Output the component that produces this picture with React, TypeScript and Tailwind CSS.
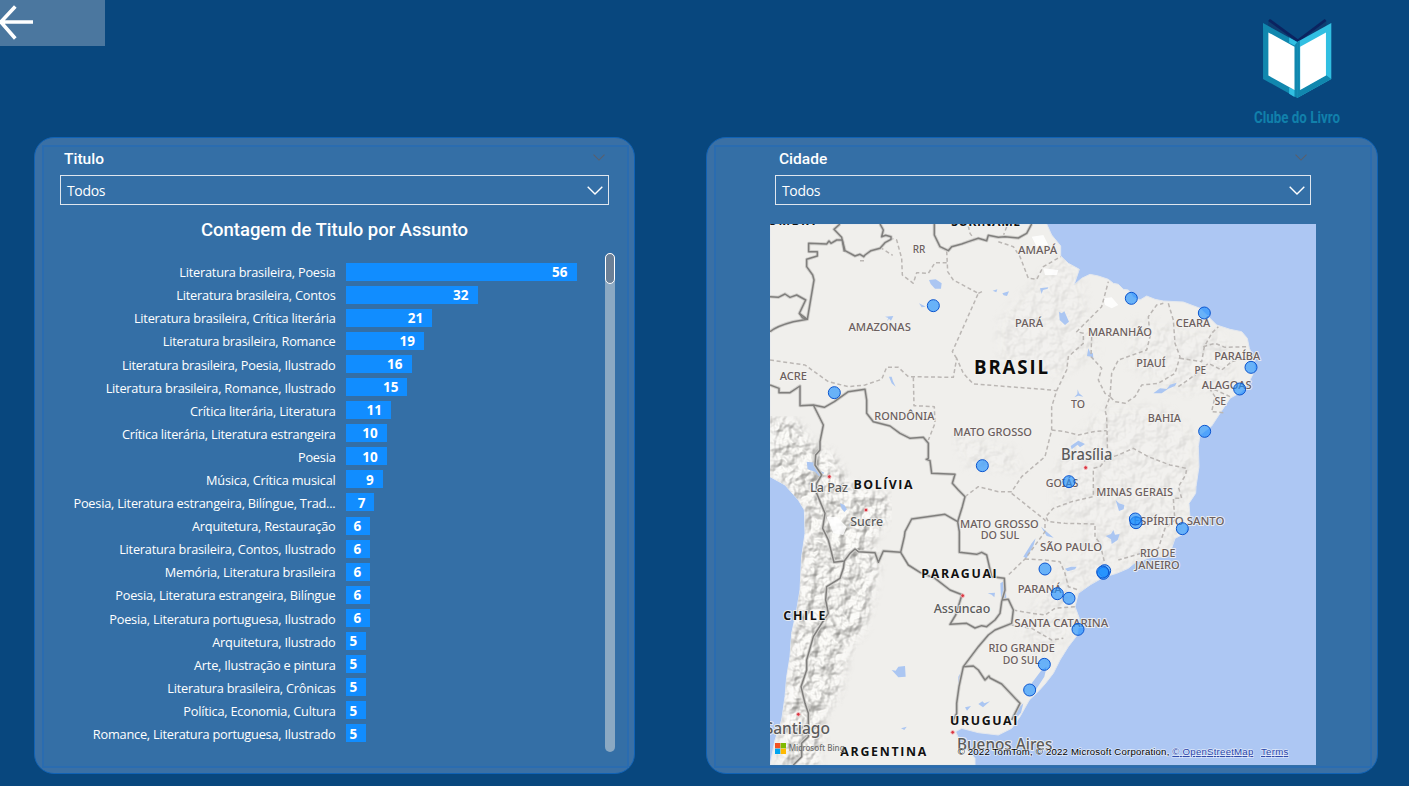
import React from "react";

type Row = { label: string; value: number };

const rows: Row[] = [
  { label: "Literatura brasileira, Poesia", value: 56 },
  { label: "Literatura brasileira, Contos", value: 32 },
  { label: "Literatura brasileira, Crítica literária", value: 21 },
  { label: "Literatura brasileira, Romance", value: 19 },
  { label: "Literatura brasileira, Poesia, Ilustrado", value: 16 },
  { label: "Literatura brasileira, Romance, Ilustrado", value: 15 },
  { label: "Crítica literária, Literatura", value: 11 },
  { label: "Crítica literária, Literatura estrangeira", value: 10 },
  { label: "Poesia", value: 10 },
  { label: "Música, Crítica musical", value: 9 },
  { label: "Poesia, Literatura estrangeira, Bilíngue, Trad...", value: 7 },
  { label: "Arquitetura, Restauração", value: 6 },
  { label: "Literatura brasileira, Contos, Ilustrado", value: 6 },
  { label: "Memória, Literatura brasileira", value: 6 },
  { label: "Poesia, Literatura estrangeira, Bilíngue", value: 6 },
  { label: "Poesia, Literatura portuguesa, Ilustrado", value: 6 },
  { label: "Arquitetura, Ilustrado", value: 5 },
  { label: "Arte, Ilustração e pintura", value: 5 },
  { label: "Literatura brasileira, Crônicas", value: 5 },
  { label: "Política, Economia, Cultura", value: 5 },
  { label: "Romance, Literatura portuguesa, Ilustrado", value: 5 },
];

const PX_PER_TITLE = 4.125;

/* Map geometry: three map units per screen pixel. */
const land =
  "M15 12 L845 12 860 45 887 78 887 108 910 130 943 148 927 195 950 175 975 163 1000 168 1030 178 1045 190 1060 193 1075 208 1090 210 1105 232 1125 240 1145 228 1170 238 1195 243 1255 246 1305 265 1330 290 1355 315 1395 328 1430 335 1447 355 1453 385 1465 410 1470 450 1450 490 1430 515 1395 535 1365 580 1340 618 1305 645 1300 680 1302 740 1293 800 1292 820 1272 850 1275 895 1260 940 1230 955 1220 985 1200 1012 1165 1010 1110 1028 1090 1045 1055 1060 1015 1072 975 1095 940 1120 930 1160 943 1195 937 1245 910 1280 885 1320 865 1360 840 1392 822 1412 793 1440 765 1490 740 1525 700 1545 640 1538 590 1525 572 1535 590 1575 612 1595 630 1615 630 1635 15 1635 30 1560 50 1500 60 1430 65 1370 75 1310 80 1240 95 1170 105 1110 110 1010 120 940 118 870 100 840 60 795 15 770Z";

const andes =
  "M15 590 L90 600 150 680 200 700 250 790 380 830 370 900 320 960 340 1040 320 1130 300 1220 250 1290 220 1420 170 1500 160 1635 40 1635 60 1450 85 1240 112 1000 118 870 15 765Z";

const highlands =
  "M870 730 L1010 560 1200 560 1290 640 1290 830 1250 940 1190 1010 1050 1050 940 1110 920 1240 840 1330 760 1240 820 1130 900 1040 960 930 870 870Z M920 60 L1000 400 880 470 700 420 700 300Z M1100 300 L1380 340 1420 500 1240 520 1090 440Z M560 640 L740 680 780 760 600 740Z";

const borders = [
  "M15 230 L40 232 60 222 75 232 95 225 122 240 103 280 127 298",
  "M15 335 Q35 318 85 305 L127 298 112 293 103 280",
  "M127 298 L147 180 143 165 125 140 125 118 157 108 157 95 131 95 131 70 185 72 192 63 198 70 215 60 232 60 240 92 270 108 285 103 296 110 300 105 318 92 345 85 360 68 378 58 378 50 362 46 350 50 355 30 345 12",
  "M238 95 L230 52 207 28 225 12",
  "M508 12 L508 45 525 80 550 92 560 80 590 72 610 65 640 55 665 62 670 46 700 52 720 50 760 54 785 40 800 12",
  "M15 495 L42 505 42 518 75 518 105 498 105 557 145 555 178 562 208 545 250 515 300 508 305 540 305 580 325 605 375 618 405 640 435 655 475 652 490 670 490 715 484 718 495 722 500 760 570 763 562 790 580 810 600 830 592 860 578 905",
  "M145 555 L175 615 165 665 165 690 152 705 150 735 170 765 155 790 155 820 180 880 173 925 190 960 207 1027 238 1023 255 1000 270 987 280 995 330 998 340 1027 355 993 407 997 418 950 420 935 440 897 540 883 578 905 583 935 583 997 635 1003 650 997 665 1005 680 1070 718 1075 720 1110 710 1145 705 1180 690 1200 665 1220 650 1217 630 1224 605 1210 555 1213 572 1185 590 1127",
  "M407 997 L430 1035 465 1057 510 1075 555 1110 593 1125",
  "M238 1023 L235 1045 225 1075 185 1100 182 1140 190 1180 170 1210 145 1250 125 1320 125 1350 108 1400 120 1450 130 1480 130 1550 110 1570 110 1610 85 1635",
  "M712 1140 L730 1138 745 1170 740 1210 690 1230 670 1245 640 1280 595 1340 582 1400 575 1450 575 1480 560 1510",
  "M595 1340 L625 1338 640 1350 660 1380 672 1368 675 1374 710 1392 765 1450 750 1480 740 1500",
];

const stateLines = [
  "M15 420 L120 435 190 485 250 500 300 495 350 478 365 442 400 442 430 470 565 472 575 415 595 460 625 492 835 508 875 512",
  "M575 415 L562 395 640 220 565 180 548 155 545 92",
  "M640 220 L655 213",
  "M545 128 L510 128 490 160 455 158 445 190 412 165 410 115 395 60 378 55",
  "M345 82 L383 106 M285 122 L305 122",
  "M445 472 L447 557 508 560 510 610 490 660",
  "M700 65 L745 80 765 110 790 175 815 178 835 140 887 110",
  "M610 18 L615 40 630 60 M725 20 L716 44",
  "M600 830 L640 800 700 815 740 815 770 770 840 710 860 630 860 560 875 512 905 450 910 410 955 370 955 340 935 335 990 280 1010 260 1030 185",
  "M980 350 L978 410 1010 445 1000 480 1020 520 1035 530",
  "M1035 530 L1040 460 1060 420 1145 390 1155 350 1150 290 1175 255 1195 250",
  "M1210 250 L1225 300 1230 370 1245 410 1230 460 1180 490 1130 495 1110 530 1080 550 1050 545 1035 530 1020 570 1025 590 1028 715",
  "M860 630 L900 635 940 645 985 635 1025 632",
  "M1245 415 L1310 425 1318 380 1340 340 1360 320",
  "M1240 500 L1290 465 1330 430 1370 450 1400 425 1465 405",
  "M1315 380 L1350 370 1380 382 1450 380",
  "M1330 500 L1395 530 M1375 578 L1340 575 1350 530 1330 500",
  "M1028 715 L1060 705 1105 685 1150 710 1215 735 1265 745 1262 765 1240 800 1250 835 1225 835 1228 880 1230 900 1200 925 1180 985 1060 1020",
  "M1025 715 L1005 740 985 745 985 830 920 845 865 865 842 890 850 905 900 910 990 912 990 950 1005 970 1018 1025",
  "M740 820 L840 900 840 935 780 1017 730 1065",
  "M780 1017 L840 1020 885 1025 900 1060 910 1100 940 1110",
  "M745 1170 L800 1180 840 1185 870 1165 930 1160",
  "M740 1215 L800 1225 860 1260 895 1255",
];

const lakes = [
  "M492 180 L512 178 530 190 528 206 510 206 497 192Z",
  "M360 290 L385 288 378 302 372 296 366 304 370 294Z",
  "M462 250 L470 262 482 260 474 256Z",
  "M683 212 L697 208 694 217Z M712 220 L732 214 726 228 716 226Z",
  "M372 470 L380 470 384 484 392 500 380 490Z",
  "M882 275 L890 280 898 274 912 305 900 315 884 300Z",
  "M970 385 L976 398 984 400 985 420 978 410 966 408Z",
  "M938 508 L942 520 955 530 940 527 928 532 937 522Z",
  "M917 678 L940 662 960 672 945 682 938 674 920 688Z",
  "M1165 520 L1185 505 1205 507 1215 494 1235 488 1230 498 1210 506 1190 520Z",
  "M1052 840 L1062 850 1078 855 1076 868 1062 873Z",
  "M1022 948 L1038 942 1045 930 1050 944 1064 942 1058 960 1040 972 1038 958Z",
  "M828 920 L845 935 866 953 845 948Z",
  "M900 1046 L918 1040 935 1040 930 1048 908 1054Z",
  "M380 1350 L392 1352 400 1340 420 1338 422 1370 400 1372Z",
  "M225 850 L238 855 246 868 238 876 230 866Z",
  "M125 725 L150 728 160 750 178 758 165 772 150 755 128 748Z",
  "M706 1090 L722 1080 724 1140 708 1135Z",
  "M668 1120 L690 1118 688 1132 680 1124Z",
  "M600 1462 L618 1458 606 1472Z M640 1452 L652 1444 658 1450 675 1444 654 1462Z",
  "M755 1470 L775 1450 768 1478 745 1505Z M800 1390 L830 1350 845 1340 838 1370 812 1410Z",
  "M408 1525 L425 1520 418 1530Z",
  "M775 1010 L800 970 812 955 806 975 785 1015Z",
  "M580 1370 L592 1350 588 1390 580 1398Z",
  "M825 205 L850 202 848 206 834 210 830 222Z",
];

type MapLabel = [text: string, cx: number, baseline: number, width: number];

const stateLabels: MapLabel[] = [
  ["RR", 462, 98, 38],
  ["AMAPÁ", 818, 101, 118],
  ["AMAZONAS", 344, 334, 187],
  ["ACRE", 85, 480, 82],
  ["RONDÔNIA", 418, 600, 180],
  ["MATO GROSSO", 683, 648, 236],
  ["PARÁ", 792, 320, 84],
  ["MARANHÃO", 1065, 348, 192],
  ["CEARÁ", 1284, 321, 104],
  ["PARAÍBA", 1417, 420, 138],
  ["PIAUÍ", 1158, 440, 88],
  ["PE", 1306, 461, 35],
  ["ALAGOAS", 1385, 507, 150],
  ["SE", 1366, 554, 35],
  ["TO", 939, 564, 42],
  ["BAHIA", 1198, 607, 100],
  ["GOIÁS", 891, 800, 98],
  ["MINAS GERAIS", 1109, 827, 230],
  ["MATO GROSSO", 703, 923, 236],
  ["DO SUL", 705, 957, 116],
  ["SÃO PAULO", 918, 994, 186],
  ["PARANÁ", 824, 1120, 132],
  ["SANTA CATARINA", 889, 1221, 282],
  ["RIO GRANDE", 770, 1297, 199],
  ["DO SUL", 769, 1331, 112],
  ["ESPÍRITO SANTO", 1242, 915, 273],
  ["RIO DE", 1178, 1011, 106],
  ["JANEIRO", 1177, 1047, 134],
];

const countryLabels: MapLabel[] = [
  ["BOLÍVIA", 354, 807, 177],
  ["PARAGUAI", 582, 1074, 226],
  ["CHILE", 118, 1200, 126],
  ["URUGUAI", 656, 1514, 202],
  ["ARGENTINA", 355, 1607, 258],
  ["SURINAME", 662, 19, 207],
  ["COLÔMBIA", 36, 16, 227],
];

const cityLabels: MapLabel[] = [
  ["La Paz", 192, 817, 114],
  ["Sucre", 305, 918, 98],
  ["Assuncao", 591, 1180, 170],
];

const bigCityLabels: MapLabel[] = [
  ["Brasília", 965, 719, 154],
  ["Santiago", 97, 1543, 196],
  ["Buenos Aires", 719, 1589, 286],
];

const capitals = [
  [193, 770],
  [303, 870],
  [593, 1127],
  [100, 1483],
  [563, 1537],
  [962, 743],
];

const bubbles = [
  [505, 257],
  [208, 518],
  [652, 737],
  [1099, 235],
  [1318, 279],
  [1458, 442],
  [1424, 507],
  [1319, 634],
  [912, 785],
  [1113, 908],
  [1111, 897],
  [1252, 926],
  [840, 1047],
  [1019, 1052],
  [1015, 1060],
  [1013, 1056],
  [877, 1121],
  [912, 1135],
  [939, 1228],
  [838, 1333],
  [794, 1410],
];

function Labels({
  items,
  className,
  adjust = "spacingAndGlyphs",
}: {
  items: MapLabel[];
  className: string;
  adjust?: "spacing" | "spacingAndGlyphs";
}) {
  return (
    <g className={className} textAnchor="middle" stroke="#f4f3f1" strokeOpacity={0.85} strokeWidth={6} strokeLinejoin="round" paintOrder="stroke">
      {items.map(([text, x, y, w], i) => (
        <text key={i} x={x} y={y} textLength={w} lengthAdjust={adjust}>
          {text}
        </text>
      ))}
    </g>
  );
}

function BrazilMap() {
  return (
    <svg viewBox="15 12 1638 1623" className="block h-[541px] w-[546px] font-['Noto_Sans',sans-serif]">
      <defs>
        <clipPath id="landClip">
          <path d={land} />
        </clipPath>
        <filter id="relief" x="0" y="0" width="1" height="1" colorInterpolationFilters="sRGB">
          <feTurbulence type="fractalNoise" baseFrequency="0.026" numOctaves={3} seed={4} />
          <feDiffuseLighting surfaceScale={20} lightingColor="#ffffff" result="lit">
            <feDistantLight azimuth={225} elevation={60} />
          </feDiffuseLighting>
          <feComponentTransfer result="tone">
            <feFuncR type="linear" slope={0.55} intercept={0.465} />
            <feFuncG type="linear" slope={0.55} intercept={0.461} />
            <feFuncB type="linear" slope={0.55} intercept={0.45} />
          </feComponentTransfer>
          <feGaussianBlur in="SourceAlpha" stdDeviation={14} result="edge" />
          <feComposite in="tone" in2="edge" operator="in" />
        </filter>
      </defs>
      <rect x={15} y={12} width={1638} height={1623} fill="#adc7f3" />
      <path d={land} fill="#f0efec" stroke="#e4e8ee" strokeWidth={3} />
      <g clipPath="url(#landClip)">
        <path d={andes} filter="url(#relief)" opacity={0.8} />
        <path d={highlands} filter="url(#relief)" opacity={0.16} />
        <g fill="#ffffff" opacity={0.85}>
          <path d="M800 50 L835 45 850 75 815 80Z M835 145 L880 150 875 165 840 165Z M1015 235 L1040 232 1060 255 1040 265 1020 255Z" />
          <path d="M185 890 L215 890 245 920 235 945 205 940Z" />
        </g>
      </g>
      <g fill="#abc6f2">
        {lakes.map((d, i) => (
          <path key={i} d={d} />
        ))}
      </g>
      <g fill="none" stroke="#bbb7b4" strokeWidth={4.5} strokeDasharray="12 8" strokeLinejoin="round">
        {stateLines.map((d, i) => (
          <path key={i} d={d} />
        ))}
      </g>
      <g fill="none" strokeLinejoin="round">
        {borders.map((d, i) => (
          <path key={i} d={d} stroke="#d0cfcc" strokeWidth={10} />
        ))}
        {borders.map((d, i) => (
          <path key={i} d={d} stroke="#807f7d" strokeWidth={4.5} />
        ))}
      </g>
      {capitals.map(([x, y], i) => (
        <circle key={i} cx={x} cy={y} r={5.5} fill="#d9343f" stroke="#f3c3c5" strokeWidth={2.5} />
      ))}
      <Labels items={stateLabels} className="fill-[#6c5f5e] text-[33px] font-medium" />
      <Labels
        items={countryLabels}
        adjust="spacing"
        className="fill-[#111111] font-['Open_Sans',sans-serif] text-[37px] font-bold"
      />
      <Labels
        items={[["BRASIL", 738, 461, 222]]}
        adjust="spacing"
        className="fill-[#0c0c0c] font-['Open_Sans',sans-serif] text-[56px] font-bold"
      />
      <Labels items={cityLabels} className="fill-[#5b5b5b] text-[39px] font-medium" />
      <Labels items={bigCityLabels} className="fill-[#5b5b5b] text-[46px] font-medium" />
      <g fill="#1e90ff" fillOpacity={0.65} stroke="#0b55cf" strokeWidth={3}>
        {bubbles.map(([x, y], i) => (
          <circle key={i} cx={x} cy={y} r={18} />
        ))}
      </g>
      <g>
        <rect x={30} y={1569} width={16} height={16} fill="#f25022" />
        <rect x={47} y={1569} width={16} height={16} fill="#7fba00" />
        <rect x={30} y={1586} width={16} height={16} fill="#00a4ef" />
        <rect x={47} y={1586} width={16} height={16} fill="#ffb900" />
        <text x={71} y={1593} textLength={168} lengthAdjust="spacingAndGlyphs" className="fill-[#6f6f6f] text-[26px] font-medium">
          Microsoft Bing
        </text>
      </g>
      <g className="font-['Liberation_Sans',Arial,sans-serif] text-[29px]" stroke="#ffffff" strokeOpacity={0.6} strokeWidth={4} paintOrder="stroke">
        <text x={578} y={1605} textLength={635} className="fill-black">
          © 2022 TomTom, © 2022 Microsoft Corporation,
        </text>
        <text x={1222} y={1605} textLength={243} className="fill-[#2a45a8] underline">
          © OpenStreetMap
        </text>
        <text x={1488} y={1605} textLength={82} className="fill-[#2a45a8] underline">
          Terms
        </text>
      </g>
    </svg>
  );
}

function Chevron({ className }: { className: string }) {
  return (
    <svg viewBox="0 0 16 9" fill="none" stroke="currentColor" className={className}>
      <path d="M0.7 0.7 L8 8 L15.3 0.7" strokeWidth={1.4} />
    </svg>
  );
}

function Slicer({ title, className }: { title: string; className: string }) {
  return (
    <div className={className}>
      <div className="flex h-[28px] items-start justify-between pt-[4px] pr-[4px] pl-[4px]">
        <span className="font-['Roboto',sans-serif] text-[15.5px] leading-[16px] font-medium text-white">{title}</span>
        <Chevron className="mt-[3px] h-[7px] w-[12px] text-[#5a5f6c]" />
      </div>
      <div className="flex h-[30px] items-center justify-between border border-[#dfe6ee] pr-[5px] pl-[6px] text-white">
        <span className="pt-[2px] font-['Open_Sans',sans-serif] text-[14px] leading-none tracking-[-0.35px]">Todos</span>
        <Chevron className="h-[9px] w-[16px]" />
      </div>
    </div>
  );
}

function Panel({ className, children }: { className: string; children: React.ReactNode }) {
  return (
    <section className={`flex h-[637px] rounded-[20px] border border-[#1062b5] bg-[#3a70a5] pt-[7px] pr-[5px] pb-[5px] pl-[7px] ${className}`}>
      <div className="flex flex-1 flex-col border-2 border-[#2a6cb0] bg-[#346fa6]">{children}</div>
    </section>
  );
}

function Logo() {
  return (
    <div className="flex w-[94px] flex-col items-center">
      <svg viewBox="186 54 212 242" className="h-[81px] w-[71px]">
        <path d="M205 62 L211 57 L293 119 L372 57 L378 63 L378 78 L293 126 L205 78Z" fill="#0f3c70" />
        <path d="M207 60 L293 122 L376 60" fill="none" stroke="#0b2360" strokeWidth={8} />
        <path d="M189 69 L291 126 L291 293 L189 236Z" fill="#1187ae" />
        <path d="M393 69 L291 126 L291 293 L393 236Z" fill="#31bfe2" />
        <path d="M291 126 L299 122 L299 268 L378 225 L393 236 L291 293Z" fill="#1187ae" />
        <path d="M267 112 L291 126 L283 136 L267 128Z M267 262 L283 268 L283 290 L267 280Z" fill="#31bfe2" />
        <path d="M205 97 L283 140 L283 269 L205 226Z" fill="#ffffff" />
        <path d="M377 97 L300 140 L300 269 L377 226Z" fill="#ffffff" />
      </svg>
      <svg viewBox="0 0 94 22" className="mt-[7px] h-[22px] w-[94px] font-['Roboto',sans-serif]">
        <text x={4} y={17} textLength={86} lengthAdjust="spacingAndGlyphs" className="fill-[#1180ab] text-[16.5px] font-bold">
          Clube do Livro
        </text>
      </svg>
    </div>
  );
}

export default function App() {
  return (
    <main className="flex h-[786px] w-[1409px] flex-col overflow-hidden bg-[#08477e]">
      <header className="flex h-[137px] shrink-0 items-start justify-between pr-[65px]">
        <button className="flex h-[45.5px] w-[105px] items-center bg-[#4b779f]" aria-label="Voltar">
          <svg viewBox="0 0 35 36" fill="none" stroke="#ffffff" strokeWidth={3.6} className="h-[36px] w-[35px]">
            <path d="M33 17 H1 M15.3 1.5 L0.8 17 L15.3 33.5" />
          </svg>
        </button>
        <div className="pt-[18px]">
          <Logo />
        </div>
      </header>

      <div className="flex gap-[71px] pl-[34px]">
        <Panel className="w-[601px]">
          <Slicer title="Titulo" className="ml-[16px] w-[549px]" />
          <h2 className="mt-[15px] ml-[16px] w-[549px] text-center font-['Roboto',sans-serif] text-[18.5px] leading-[20px] font-medium text-white">
            Contagem de Titulo por Assunto
          </h2>
          <div className="mt-[13px] flex h-[499px] justify-between pr-[12px]">
            <div className="flex flex-col pt-[7px]">
              {rows.map((row) => (
                <div key={row.label} className="flex h-[23.1px] shrink-0 items-center">
                  <span className="w-[291.5px] pt-[2px] text-right font-['Open_Sans',sans-serif] text-[12.75px] leading-none tracking-[-0.22px] whitespace-nowrap text-white">
                    {row.label}
                  </span>
                  <div
                    className="ml-[10px] flex h-[18px] items-center justify-end bg-[#118dff] pt-[2px] pr-[9px] font-['Open_Sans',sans-serif] text-[13.5px] leading-none font-bold text-white"
                    style={{ width: row.value * PX_PER_TITLE }}
                  >
                    {row.value}
                  </div>
                </div>
              ))}
            </div>
            <div className="w-[10px] rounded-full bg-[#8ba9c3]">
              <div className="h-[31px] rounded-full border border-white bg-[#6b8097]" />
            </div>
          </div>
        </Panel>

        <Panel className="w-[672px]">
          <Slicer title="Cidade" className="ml-[59px] w-[536px]" />
          <div className="mt-[19px] ml-[54px] w-[546px]">
            <BrazilMap />
          </div>
        </Panel>
      </div>
    </main>
  );
}
